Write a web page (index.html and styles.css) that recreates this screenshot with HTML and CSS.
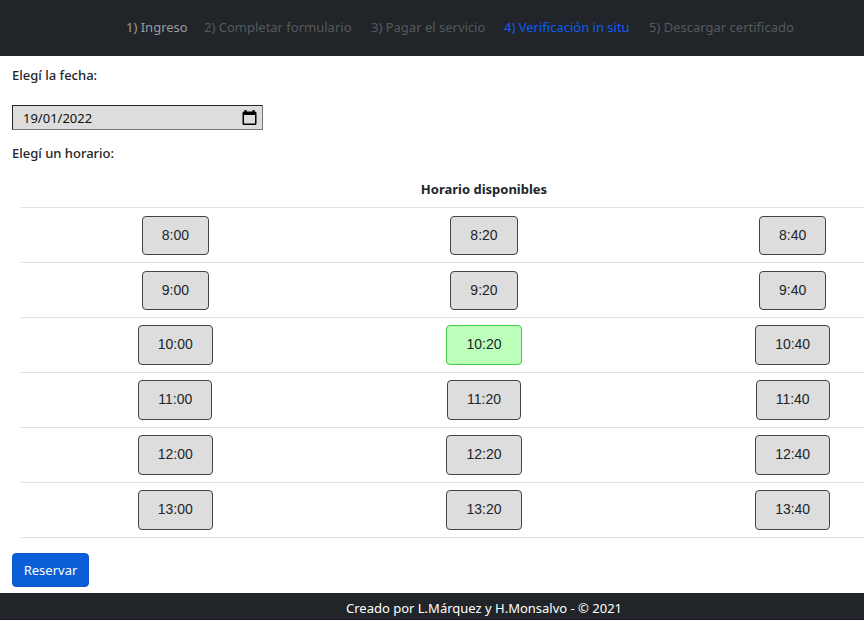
FILE: index.html
```html
<!DOCTYPE html>
<html lang="es">
<head>
<meta charset="utf-8">
<title>Verificación in situ</title>
<link rel="stylesheet" href="styles.css">
</head>
<body>
<nav class="steps">
  <span class="step step-done">1) Ingreso</span>
  <span class="step step-form">2) Completar formulario</span>
  <span class="step step-pay">3) Pagar el servicio</span>
  <span class="step step-current">4) Verificación in situ</span>
  <span class="step step-download">5) Descargar certificado</span>
</nav>
<main>
  <p class="label label-date">Elegí la fecha:</p>
  <div class="date">
    <span class="date-value">19/01/2022</span>
    <svg class="calendar" width="15" height="16" viewBox="0 0 15 16"><path fill="#000" fill-rule="evenodd" d="M2.5 0h2v1.5h6V0h2v1.5h.5a1.5 1.5 0 0 1 1.5 1.5v10.5a1.5 1.5 0 0 1-1.5 1.5H2A1.5 1.5 0 0 1 .5 13.5V3A1.5 1.5 0 0 1 2 1.5h.5zM2 5v8.5h11V5z"/></svg>
  </div>
  <p class="label label-time">Elegí un horario:</p>
  <table class="slots">
    <thead><tr><th></th><th><span class="title">Horario disponibles</span></th><th></th></tr></thead>
    <tbody>
      <tr class="short"><td><button>8:00</button></td><td><button>8:20</button></td><td><button>8:40</button></td></tr>
      <tr class="short"><td><button>9:00</button></td><td><button>9:20</button></td><td><button>9:40</button></td></tr>
      <tr><td><button>10:00</button></td><td><button class="selected">10:20</button></td><td><button>10:40</button></td></tr>
      <tr><td><button>11:00</button></td><td><button>11:20</button></td><td><button>11:40</button></td></tr>
      <tr><td><button>12:00</button></td><td><button>12:20</button></td><td><button>12:40</button></td></tr>
      <tr><td><button>13:00</button></td><td><button>13:20</button></td><td><button>13:40</button></td></tr>
    </tbody>
  </table>
  <button class="reserve"><span>Reservar</span></button>
</main>
<footer><span>Creado por L.Márquez y H.Monsalvo - © 2021</span></footer>
</body>
</html>
```
FILE: styles.css
```css
* { box-sizing: border-box; }
body {
  margin: 0;
  height: 620px;
  overflow: hidden;
  display: flex;
  flex-direction: column;
  background: #fff;
  color: #212529;
  font: 13px/20px "Noto Sans", sans-serif;
  white-space: nowrap;
}
.steps {
  height: 56px;
  flex: none;
  display: flex;
  align-items: center;
  gap: 14.5px;
  padding: 0 0 2px 126px;
  background: #212529;
  color: #56595c;
}
.step { flex: none; }
.step-done { width: 63.5px; color: #9b9d9f; }
.step-form { width: 152.5px; }
.step-pay { width: 118.5px; }
.step-current { width: 130.5px; color: #0d5cf5; }
.step-download { width: 151px; }
main { flex: none; height: 537px; padding: 9px 0 0 12px; overflow: hidden; }
.label { margin: 0; font-weight: 500; }
.date {
  display: flex;
  align-items: center;
  justify-content: space-between;
  width: 251px;
  height: 25px;
  margin: 20px 0 13px;
  padding: 0 5px 0 10px;
  background: #ddd;
  border: 1px solid;
  border-color: #212529 #767676 #767676 #212529;
  color: #111;
}
.slots {
  width: 926px;
  margin: 10px 0 0 9px;
  border-collapse: collapse;
  table-layout: fixed;
  text-align: center;
}
.slots th { height: 34px; padding: 0 0 1px; border-bottom: 1px solid #dee2e6; font-weight: 700; }
.slots td { height: 55px; padding: 0; border-bottom: 1px solid #dee2e6; vertical-align: middle; }
.slots button {
  display: block;
  height: 40px;
  margin: 0 auto;
  padding: 0 19px 2px;
  border: 1px solid #444;
  border-radius: 4px;
  background: #ddd;
  color: #212529;
  font: 14px "Liberation Sans", Arial, sans-serif;
}
.slots .short button { height: 39px; position: relative; top: 1px; }
.slots .selected { background: #bfb; border-color: #4c4; }
.reserve {
  display: block;
  width: 77px;
  height: 34px;
  margin-top: 15px;
  padding: 0;
  border: 1px solid #0a58ca;
  border-radius: 4px;
  background: #0b5ed7;
  color: #fff;
  font: 13px "Noto Sans", sans-serif;
}
footer {
  flex: none;
  height: 27px;
  padding: 5px 0 0 346px;
  background: #212529;
  border-bottom: 1px solid #1a1a1e;
  color: #fff;
}
```
